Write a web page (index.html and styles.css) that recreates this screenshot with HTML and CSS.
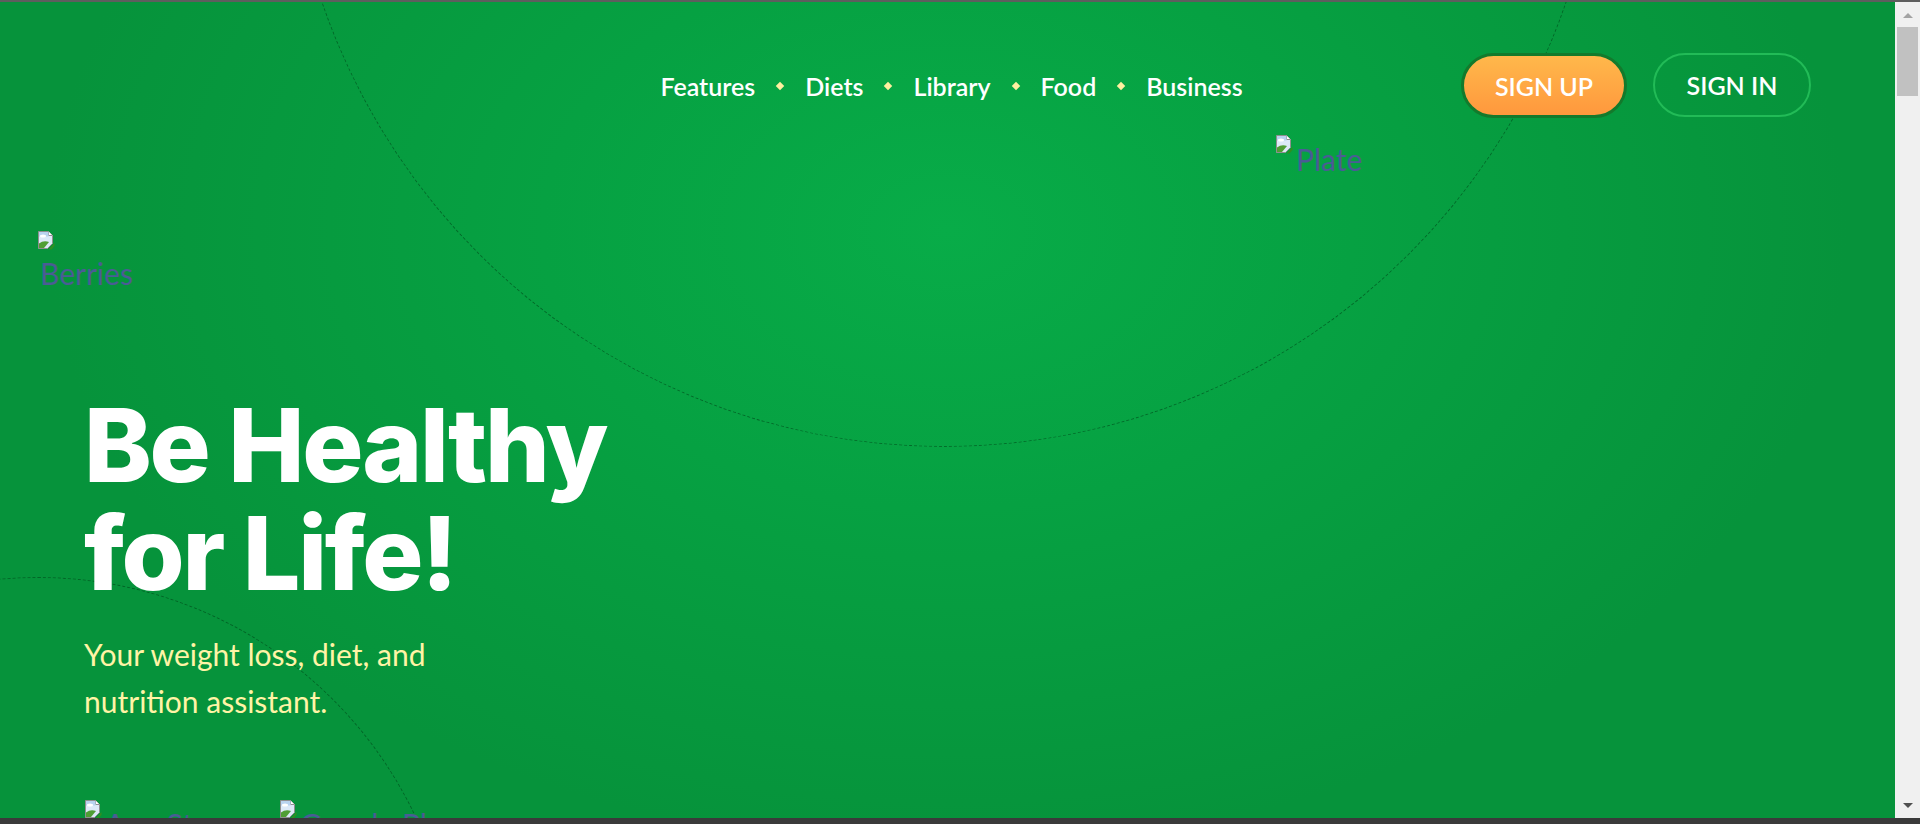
FILE: index.html
```html
<!DOCTYPE html>
<html lang="en">
<head>
<meta charset="utf-8">
<title>Be Healthy for Life!</title>
<link rel="stylesheet" href="styles.css">
</head>
<body>
<div class="window">
  <div class="topbar"></div>
  <div class="viewport">
    <main class="hero">
      <div class="ring ring-big"></div>
      <div class="ring ring-small"></div>

      <header class="header">
        <div class="logo"></div>
        <nav class="nav">
          <a class="nav-link" href="#">Features</a>
          <span class="dot"></span>
          <a class="nav-link" href="#">Diets</a>
          <span class="dot"></span>
          <a class="nav-link" href="#">Library</a>
          <span class="dot"></span>
          <a class="nav-link" href="#">Food</a>
          <span class="dot"></span>
          <a class="nav-link" href="#">Business</a>
        </nav>
        <div class="actions">
          <a class="btn btn-signup" href="#">SIGN UP</a>
          <a class="btn btn-signin" href="#">SIGN IN</a>
        </div>
      </header>

      <div class="broken broken-plate">
        <svg class="broken-icon" viewBox="0 0 18 20"><path d="M1.5 1.5h10l4 4v8l-5 5h-9z" fill="#dce9f7" stroke="#8f8f8f"/><path d="M11.5 1.5v4h4" fill="#fff" stroke="#8f8f8f"/><path d="M2 2h9.5v4.5H2z" fill="#b9d3ef"/><ellipse cx="6" cy="6" rx="3" ry="1.5" fill="#fff"/><path d="M2 18V13.5Q6.5 10 12 12L7 18z" fill="#4f9e34"/><path d="M11.5 19.5l6-6.5v3L14.5 19.5z" fill="#2f8f22"/></svg><span class="alt">Plate</span>
      </div>
      <div class="broken broken-berries">
        <svg class="broken-icon" viewBox="0 0 18 20"><path d="M1.5 1.5h10l4 4v8l-5 5h-9z" fill="#dce9f7" stroke="#8f8f8f"/><path d="M11.5 1.5v4h4" fill="#fff" stroke="#8f8f8f"/><path d="M2 2h9.5v4.5H2z" fill="#b9d3ef"/><ellipse cx="6" cy="6" rx="3" ry="1.5" fill="#fff"/><path d="M2 18V13.5Q6.5 10 12 12L7 18z" fill="#4f9e34"/><path d="M11.5 19.5l6-6.5v3L14.5 19.5z" fill="#2f8f22"/></svg>
        <span class="alt alt-block">Berries</span>
      </div>

      <section class="intro">
        <h1 class="title">Be Healthy<br>for Life!</h1>
        <p class="subtitle">Your weight loss, diet, and<br>nutrition assistant.</p>
        <div class="badges">
          <div class="badge">
            <svg class="broken-icon" viewBox="0 0 18 20"><path d="M1.5 1.5h10l4 4v8l-5 5h-9z" fill="#dce9f7" stroke="#8f8f8f"/><path d="M11.5 1.5v4h4" fill="#fff" stroke="#8f8f8f"/><path d="M2 2h9.5v4.5H2z" fill="#b9d3ef"/><ellipse cx="6" cy="6" rx="3" ry="1.5" fill="#fff"/><path d="M2 18V13.5Q6.5 10 12 12L7 18z" fill="#4f9e34"/><path d="M11.5 19.5l6-6.5v3L14.5 19.5z" fill="#2f8f22"/></svg><span class="alt">App Store</span>
          </div>
          <div class="badge">
            <svg class="broken-icon" viewBox="0 0 18 20"><path d="M1.5 1.5h10l4 4v8l-5 5h-9z" fill="#dce9f7" stroke="#8f8f8f"/><path d="M11.5 1.5v4h4" fill="#fff" stroke="#8f8f8f"/><path d="M2 2h9.5v4.5H2z" fill="#b9d3ef"/><ellipse cx="6" cy="6" rx="3" ry="1.5" fill="#fff"/><path d="M2 18V13.5Q6.5 10 12 12L7 18z" fill="#4f9e34"/><path d="M11.5 19.5l6-6.5v3L14.5 19.5z" fill="#2f8f22"/></svg><span class="alt">Google Play</span>
          </div>
        </div>
      </section>
    </main>

    <div class="scrollbar">
      <span class="arrow arrow-up"></span>
      <span class="thumb"></span>
      <span class="track"></span>
      <span class="arrow arrow-down"></span>
    </div>
  </div>
  <div class="bottombar"></div>
</div>
</body>
</html>
```

FILE: styles.css
```css
* { box-sizing: border-box; }

html, body {
  margin: 0;
  height: 824px;
  overflow: hidden;
}

body {
  font-family: Lato, "Open Sans", sans-serif;
  background: #3a3a3a;
}

.window {
  display: flex;
  flex-direction: column;
  width: 1920px;
  height: 824px;
}

.topbar {
  height: 2px;
  background: #5e5e5e;
  flex: none;
}

.bottombar {
  height: 6px;
  background: #3a3a3a;
  flex: none;
}

.viewport {
  flex: 1;
  display: flex;
  min-height: 0;
}

.hero {
  position: relative;
  flex: 1;
  overflow: hidden;
  background: radial-gradient(ellipse 900px 620px at 50% 28%, #08ac48 0%, #06a142 45%, #06933b 100%);
}

.ring {
  position: absolute;
  border-radius: 50%;
  border: 1px dashed rgba(0, 70, 25, 0.6);
  pointer-events: none;
}

.ring-big {
  left: 286px;
  top: -871px;
  width: 1316px;
  height: 1316px;
}

.ring-small {
  left: -380px;
  top: 575px;
  width: 836px;
  height: 836px;
}

/* header */
.header {
  position: relative;
  display: flex;
  align-items: center;
  padding: 51px 84px 0 84px;
}

.logo { flex: 1; }

.nav {
  display: flex;
  align-items: center;
  gap: 22px;
  margin-left: 8px;
}

.nav-link {
  color: #ffffff;
  text-decoration: none;
  font-size: 25px;
  font-weight: 600;
  line-height: 30px;
}

.dot {
  width: 6px;
  height: 6px;
  background: #fff0a0;
  transform: rotate(45deg);
}

.actions {
  flex: 1;
  display: flex;
  justify-content: flex-end;
  gap: 26px;
}

.btn {
  display: flex;
  align-items: center;
  justify-content: center;
  height: 65px;
  border-radius: 33px;
  color: #ffffff;
  text-decoration: none;
  font-size: 25px;
  font-weight: 600;
}

.btn-signup {
  width: 166px;
  border: 3px solid #137a2c;
  background: linear-gradient(#ffb84b, #ff983d);
}

.btn-signin {
  width: 158px;
  height: 64px;
  border: 2px solid #22bb57;
}

/* broken images */
.broken {
  position: absolute;
  color: #4a5c95;
  font-size: 30px;
  line-height: 34px;
}

.broken-icon {
  flex: none;
  display: block;
  width: 18px;
  height: 20px;
  min-width: 18px;
}

.broken-plate {
  left: 1275px;
  top: 132px;
  display: flex;
  align-items: flex-start;
}

.broken-plate .alt { margin-top: 8px; margin-left: 3px; }

.broken-berries {
  left: 37px;
  top: 228px;
  display: flex;
  flex-direction: column;
  align-items: flex-start;
}

.broken-berries .alt-block { margin-top: 6px; margin-left: 3px; }

/* intro */
.intro {
  position: relative;
  padding: 273px 0 0 84px;
}

.title {
  margin: 0;
  color: #ffffff;
  font-family: Inter, sans-serif;
  font-size: 102px;
  font-weight: 800;
  line-height: 108px;
  letter-spacing: -0.023em;
}

.subtitle {
  margin: 24px 0 0 0;
  color: #fff4a6;
  font-size: 30px;
  line-height: 47px;
}

.badges {
  display: flex;
  gap: 16px;
  margin-top: 74px;
}

.badge {
  width: 179px;
  display: flex;
  align-items: flex-start;
  color: #4a5c95;
  font-size: 30px;
  line-height: 34px;
  white-space: nowrap;
}

.badge .alt { margin-top: 8px; margin-left: 3px; }

/* scrollbar */
.scrollbar {
  flex: none;
  width: 25px;
  background: #f0f0f0;
  display: flex;
  flex-direction: column;
  align-items: center;
  padding: 11px 2px 10px 2px;
}

.arrow {
  width: 0;
  height: 0;
  border-left: 5px solid transparent;
  border-right: 5px solid transparent;
}

.arrow-up { border-bottom: 5px solid #a3a3a3; }

.arrow-down { border-top: 5px solid #505050; }

.thumb {
  width: 21px;
  height: 69px;
  margin-top: 9px;
  background: #c1c1c1;
}

.track { flex: 1; }
```
